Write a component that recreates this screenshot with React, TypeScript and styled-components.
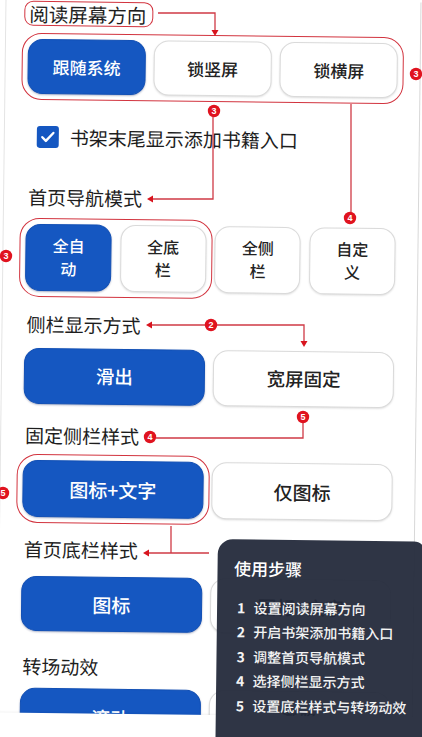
import React from "react";
import styled, { createGlobalStyle, css } from "styled-components";

const RED = "#d2343f";
const BLUE = "#1557c1";

const GlobalStyle = createGlobalStyle`
  html, body {
    margin: 0;
    padding: 0;
    background: #fff;
  }
  body {
    font-family: "Noto Sans CJK SC", "Noto Sans", sans-serif;
    overflow: hidden;
  }
  * {
    box-sizing: border-box;
  }
`;

const Viewport = styled.div`
  position: relative;
  width: 422px;
  height: 737px;
  overflow: hidden;
  background: #fff;
`;

// the photo is turned a little clockwise
const Screen = styled.div`
  position: relative;
  width: 422px;
  height: 737px;
  transform: rotate(0.7deg);
  transform-origin: 211px 368.5px;
`;

const Page = styled.main`
  margin-left: 1px;
  width: 416px;
  height: 100%;
  border-left: 1px solid #e4e4e4;
  border-right: 1px solid #d8d8d8;
  padding: 2.5px 22px 0 22px;
  display: flex;
  flex-direction: column;
`;

const Title = styled.h2<{ $top: number; $marked?: boolean }>`
  margin: ${(p) => p.$top}px 0 0;
  padding-left: 2px;
  font-size: 19px;
  font-weight: 400;
  line-height: 26px;
  color: #1d1d1d;
  white-space: nowrap;

  ${(p) =>
    p.$marked &&
    css`
      align-self: flex-start;
      margin-left: -4.5px;
      padding: 0 6px 0 4.5px;
      line-height: 23px;
      font-size: 19.5px;
      border: 1.5px solid ${RED};
      border-radius: 9px;
    `}
`;

const marking = css`
  outline: 1.6px solid ${RED};
  outline-offset: 5px;
`;

const Choices = styled.div<{ $top?: number; $cols: number; $marked?: boolean }>`
  display: grid;
  grid-template-columns: repeat(${(p) => p.$cols}, 1fr);
  gap: 8.5px;
  margin-top: ${(p) => p.$top ?? 0}px;
  border-radius: 14px;
  ${(p) => p.$marked && marking}
`;

const Choice = styled.button<{ $active?: boolean; $h: number; $size: number; $marked?: boolean }>`
  height: ${(p) => p.$h}px;
  padding: 0 10px;
  border-radius: 15px;
  font-family: inherit;
  font-size: ${(p) => p.$size}px;
  font-weight: 500;
  line-height: 23px;
  cursor: pointer;
  background: ${(p) => (p.$active ? BLUE : "#fff")};
  color: ${(p) => (p.$active ? "#fff" : "#222")};
  border: ${(p) => (p.$active ? "1px solid #1250b5" : "1.5px solid #dadada")};
  box-shadow: ${(p) =>
    p.$active ? "0 1px 2px rgba(0, 20, 80, 0.3)" : "0 1px 2px rgba(0, 0, 0, 0.12)"};
  ${(p) => p.$marked && marking}
`;

const CheckRow = styled.label`
  display: flex;
  align-items: center;
  gap: 11px;
  height: 26px;
  margin-top: 29.5px;
  padding-left: 10px;
  font-size: 19px;
  color: #1d1d1d;
`;

const CheckBox = styled.span`
  width: 22px;
  height: 22px;
  border-radius: 3px;
  background: ${BLUE};
  display: grid;
  place-items: center;
`;

const BottomSheet = styled.div`
  position: absolute;
  left: -6px;
  right: 0;
  bottom: -8px;
  height: 30.5px;
  background: #fff;
  box-shadow: 0 -1px 2px rgba(0, 0, 0, 0.05);
`;

const Steps = styled.aside`
  position: absolute;
  left: 220px;
  top: 539px;
  right: -6px;
  bottom: -8px;
  padding: 17px 0 0 16.5px;
  border-radius: 15px 12px 0 0;
  background: rgba(36, 42, 59, 0.95);
  color: #fff;
`;

const StepsTitle = styled.h3`
  margin: 0;
  font-size: 17px;
  font-weight: 500;
  line-height: 24px;
`;

const StepList = styled.ol`
  margin: 14.5px 0 0;
  padding: 0 0 0 3.5px;
  list-style: none;
`;

const Step = styled.li`
  display: grid;
  grid-template-columns: 16.5px auto;
  font-size: 14px;
  font-weight: 500;
  line-height: 24.5px;
  color: #f4f4f4;
  white-space: nowrap;
`;

const StepNo = styled.span`
  font-weight: 600;
`;

const Marks = styled.svg`
  position: absolute;
  inset: 0;
  z-index: 5;
  pointer-events: none;
`;

type Opt = { label: string[]; active?: boolean; marked?: boolean };

const Label = ({ lines }: { lines: string[] }) => (
  <>
    {lines.map((l, i) => (
      <React.Fragment key={i}>
        {i > 0 && <br />}
        {l}
      </React.Fragment>
    ))}
  </>
);

const Row = ({
  opts,
  top,
  h,
  size,
  marked,
}: {
  opts: Opt[];
  top: number;
  h: number;
  size: number;
  marked?: boolean;
}) => (
  <Choices $top={top} $cols={opts.length} $marked={marked}>
    {opts.map((o) => (
      <Choice key={o.label.join("")} $active={o.active} $marked={o.marked} $h={h} $size={size}>
        <Label lines={o.label} />
      </Choice>
    ))}
  </Choices>
);

const navOpts: Opt[][] = [
  [{ label: ["全自", "动"], active: true }, { label: ["全底", "栏"] }],
  [{ label: ["全侧", "栏"] }, { label: ["自定", "义"] }],
];

const steps = [
  "设置阅读屏幕方向",
  "开启书架添加书籍入口",
  "调整首页导航模式",
  "选择侧栏显示方式",
  "设置底栏样式与转场动效",
];

const Badge = ({ x, y, n }: { x: number; y: number; n: number }) => (
  <g>
    <circle cx={x} cy={y} r={6.2} fill="#e0131f" />
    <text
      x={x}
      y={y + 3.2}
      textAnchor="middle"
      fontSize="9"
      fontWeight="700"
      fontFamily="'Liberation Sans', Arial, sans-serif"
      fill="#fff"
    >
      {n}
    </text>
  </g>
);

const Arrow = ({ x, y, dir }: { x: number; y: number; dir: "down" | "left" }) =>
  dir === "down" ? (
    <polygon points={`${x - 3.5},${y - 6} ${x + 3.5},${y - 6} ${x},${y}`} fill="#d8141e" />
  ) : (
    <polygon points={`${x + 6},${y - 3.5} ${x + 6},${y + 3.5} ${x},${y}`} fill="#d8141e" />
  );

const Annotations = () => (
  <Marks width="422" height="737" viewBox="0 0 422 737">
    <g fill="none" stroke="#cf3a45" strokeWidth="1.3">
      <polyline points="158,13 215,13 215,31" />
      <polyline points="213,117 213,199 152,199" />
      <line x1="351" y1="104" x2="351" y2="212" />
      <line x1="205" y1="325" x2="151" y2="325" />
      <polyline points="217,325 304,325 304,342" />
      <polyline points="303,423 303,438 156,438" />
      <line x1="171" y1="526" x2="171" y2="553" />
      <line x1="209" y1="553" x2="148" y2="553" />
    </g>
    <Arrow x={215} y={36} dir="down" />
    <Arrow x={147} y={199} dir="left" />
    <Arrow x={146} y={325} dir="left" />
    <Arrow x={304} y={347} dir="down" />
    <Arrow x={143} y={553} dir="left" />
    <Badge x={416} y={74} n={3} />
    <Badge x={214} y={111} n={3} />
    <Badge x={350} y={218} n={4} />
    <Badge x={6} y={256} n={3} />
    <Badge x={211} y={325} n={2} />
    <Badge x={303} y={417} n={5} />
    <Badge x={150} y={437} n={4} />
    <Badge x={3} y={493} n={5} />
  </Marks>
);

export default function App() {
  return (
    <Viewport>
      <GlobalStyle />
      <Screen>
        <Page>
          <Title $top={0} $marked>
            阅读屏幕方向
          </Title>
          <Row
            top={13}
            h={55.5}
            size={17}
            marked
            opts={[{ label: ["跟随系统"], active: true }, { label: ["锁竖屏"] }, { label: ["锁横屏"] }]}
          />

          <CheckRow>
            <CheckBox>
              <svg width="16" height="16" viewBox="0 0 16 16">
                <path
                  d="M2.5 8.3l3.6 3.6 7.4-8"
                  fill="none"
                  stroke="#fff"
                  strokeWidth="2.4"
                  strokeLinecap="round"
                  strokeLinejoin="round"
                />
              </svg>
            </CheckBox>
            书架末尾显示添加书籍入口
          </CheckRow>

          <Title $top={34}>首页导航模式</Title>
          <Choices $top={14.3} $cols={2}>
            {navOpts.map((pair, i) => (
              <Choices key={i} $cols={2} $marked={i === 0}>
                {pair.map((o) => (
                  <Choice key={o.label.join("")} $active={o.active} $h={67} $size={16}>
                    <Label lines={o.label} />
                  </Choice>
                ))}
              </Choices>
            ))}
          </Choices>

          <Title $top={19.8}>侧栏显示方式</Title>
          <Row top={11.4} h={56} size={18.5} opts={[{ label: ["滑出"], active: true }, { label: ["宽屏固定"] }]} />

          <Title $top={17.6}>固定侧栏样式</Title>
          <Row
            top={12.9}
            h={56.5}
            size={19}
            opts={[{ label: ["图标+文字"], active: true, marked: true }, { label: ["仅图标"] }]}
          />

          <Title $top={18.6}>首页底栏样式</Title>
          <Row top={14.6} h={55} size={19} opts={[{ label: ["图标"], active: true }, { label: ["图标+文字"] }]} />

          <Title $top={21.7}>转场动效</Title>
          <Row top={9.4} h={56} size={19} opts={[{ label: ["滚动"], active: true }, { label: ["渐隐"] }]} />
        </Page>

        <BottomSheet />

        <Steps>
          <StepsTitle>使用步骤</StepsTitle>
          <StepList>
            {steps.map((s, i) => (
              <Step key={s}>
                <StepNo>{i + 1}</StepNo>
                {s}
              </Step>
            ))}
          </StepList>
        </Steps>
      </Screen>
      <Annotations />
    </Viewport>
  );
}
